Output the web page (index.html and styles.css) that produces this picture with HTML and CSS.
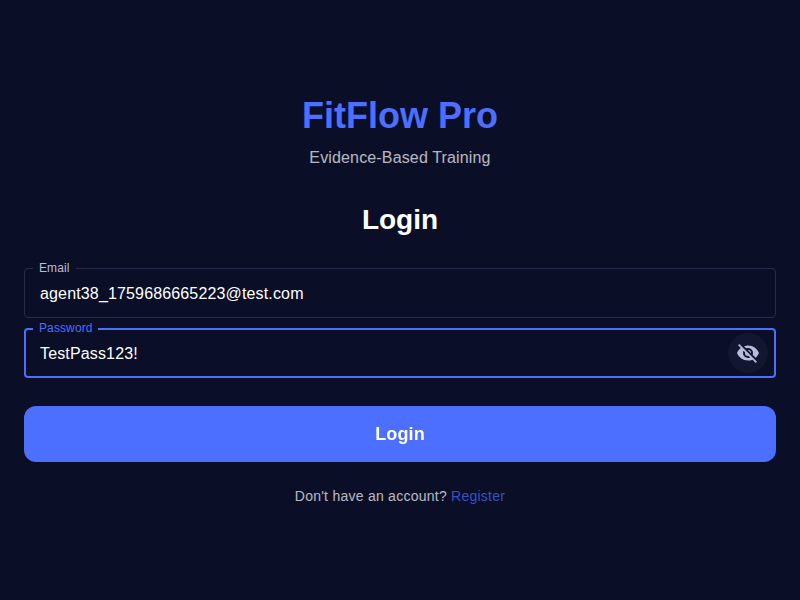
FILE: index.html
```html
<!DOCTYPE html>
<html lang="en">
<head>
<meta charset="utf-8">
<title>FitFlow Pro</title>
<link rel="stylesheet" href="styles.css">
</head>
<body>
<main class="page">
  <h1 class="brand">FitFlow Pro</h1>
  <p class="tagline">Evidence-Based Training</p>
  <h2 class="title">Login</h2>
  <form class="form">
    <div class="field">
      <span class="label">Email</span>
      <span class="value">agent38_1759686665223@test.com</span>
    </div>
    <div class="field field-focused">
      <span class="label">Password</span>
      <span class="value">TestPass123!</span>
      <button class="toggle" type="button" aria-label="Show password">
        <svg viewBox="0 0 24 24" width="24" height="24"><path d="M11.83,9L15,12.16C15,12.11 15,12.05 15,12A3,3 0 0,0 12,9C11.94,9 11.89,9 11.83,9M7.53,9.8L9.08,11.35C9.03,11.56 9,11.77 9,12A3,3 0 0,0 12,15C12.22,15 12.44,14.97 12.65,14.92L14.2,16.47C13.53,16.8 12.79,17 12,17A5,5 0 0,1 7,12C7,11.21 7.2,10.47 7.53,9.8M2,4.27L4.28,6.55L4.73,7C3.08,8.3 1.78,10 1,12C2.73,16.39 7,19.5 12,19.5C13.55,19.5 15.03,19.2 16.38,18.66L16.81,19.08L19.73,22L21,20.73L3.27,3M12,7A5,5 0 0,1 17,12C17,12.64 16.87,13.26 16.64,13.82L19.57,16.75C21.07,15.5 22.27,13.86 23,12C21.27,7.61 17,4.5 12,4.5C10.6,4.5 9.26,4.75 8,5.2L10.17,7.35C10.74,7.13 11.35,7 12,7Z"/></svg>
      </button>
    </div>
    <button class="submit" type="button"><span class="submit-text">Login</span></button>
  </form>
  <p class="footer"><span class="muted">Don't have an account?</span> <a class="link">Register</a></p>
</main>
</body>
</html>
```
FILE: styles.css
```css
* { box-sizing: border-box; margin: 0; }
body {
  background: #0a0e27;
  color: #fff;
  font-family: "Liberation Sans", Arial, sans-serif;
}
.page {
  height: 600px;
  padding: 94px 24px 0;
  text-align: center;
}
.brand {
  font-size: 36px;
  line-height: 44px;
  font-weight: 700;
  color: #4c6fff;
}
.tagline {
  margin-top: 8px;
  font-size: 16px;
  line-height: 24px;
  letter-spacing: 0.15px;
  opacity: 0.7;
}
.title {
  margin-top: 32px;
  font-size: 28px;
  line-height: 36px;
  font-weight: 700;
}
.form { margin-top: 30px; }
.field {
  position: relative;
  display: flex;
  align-items: center;
  justify-content: space-between;
  height: 50px;
  padding: 0 7px 0 15px;
  border: 1px solid #272b49;
  border-radius: 4px;
}
.field + .field { margin-top: 10px; }
.field-focused {
  border: 2px solid #4c6fff;
  padding: 0 6px 0 14px;
}
.label {
  position: absolute;
  top: -9px;
  left: 8px;
  padding: 0 6px;
  background: #0a0e27;
  font-size: 12px;
  line-height: 16px;
  letter-spacing: 0.11px;
  color: #b8bcdc;
}
.field-focused .label {
  top: -10px;
  left: 7px;
  padding-right: 5px;
  color: #4c6fff;
}
.value {
  padding-top: 2px;
  font-size: 16px;
  line-height: 20px;
  letter-spacing: 0.15px;
}
.toggle {
  display: flex;
  align-items: center;
  justify-content: center;
  width: 40px;
  height: 40px;
  padding: 0;
  border: 0;
  border-radius: 50%;
  background: #12162f;
}
.toggle path { fill: #b8bcdc; }
.submit {
  display: block;
  width: 100%;
  height: 56px;
  margin-top: 28px;
  padding: 0;
  border: 0;
  border-radius: 12px;
  background: #4c6fff;
  color: #fff;
  font: 700 18px/24px "Liberation Sans", Arial, sans-serif;
  letter-spacing: 0.15px;
}
.submit-text { will-change: opacity; }
.footer {
  margin-top: 24px;
  font-size: 14px;
  line-height: 20px;
  letter-spacing: 0.25px;
}
.muted { opacity: 0.7; }
.link { color: #4c6fff; opacity: 0.7; }
```
